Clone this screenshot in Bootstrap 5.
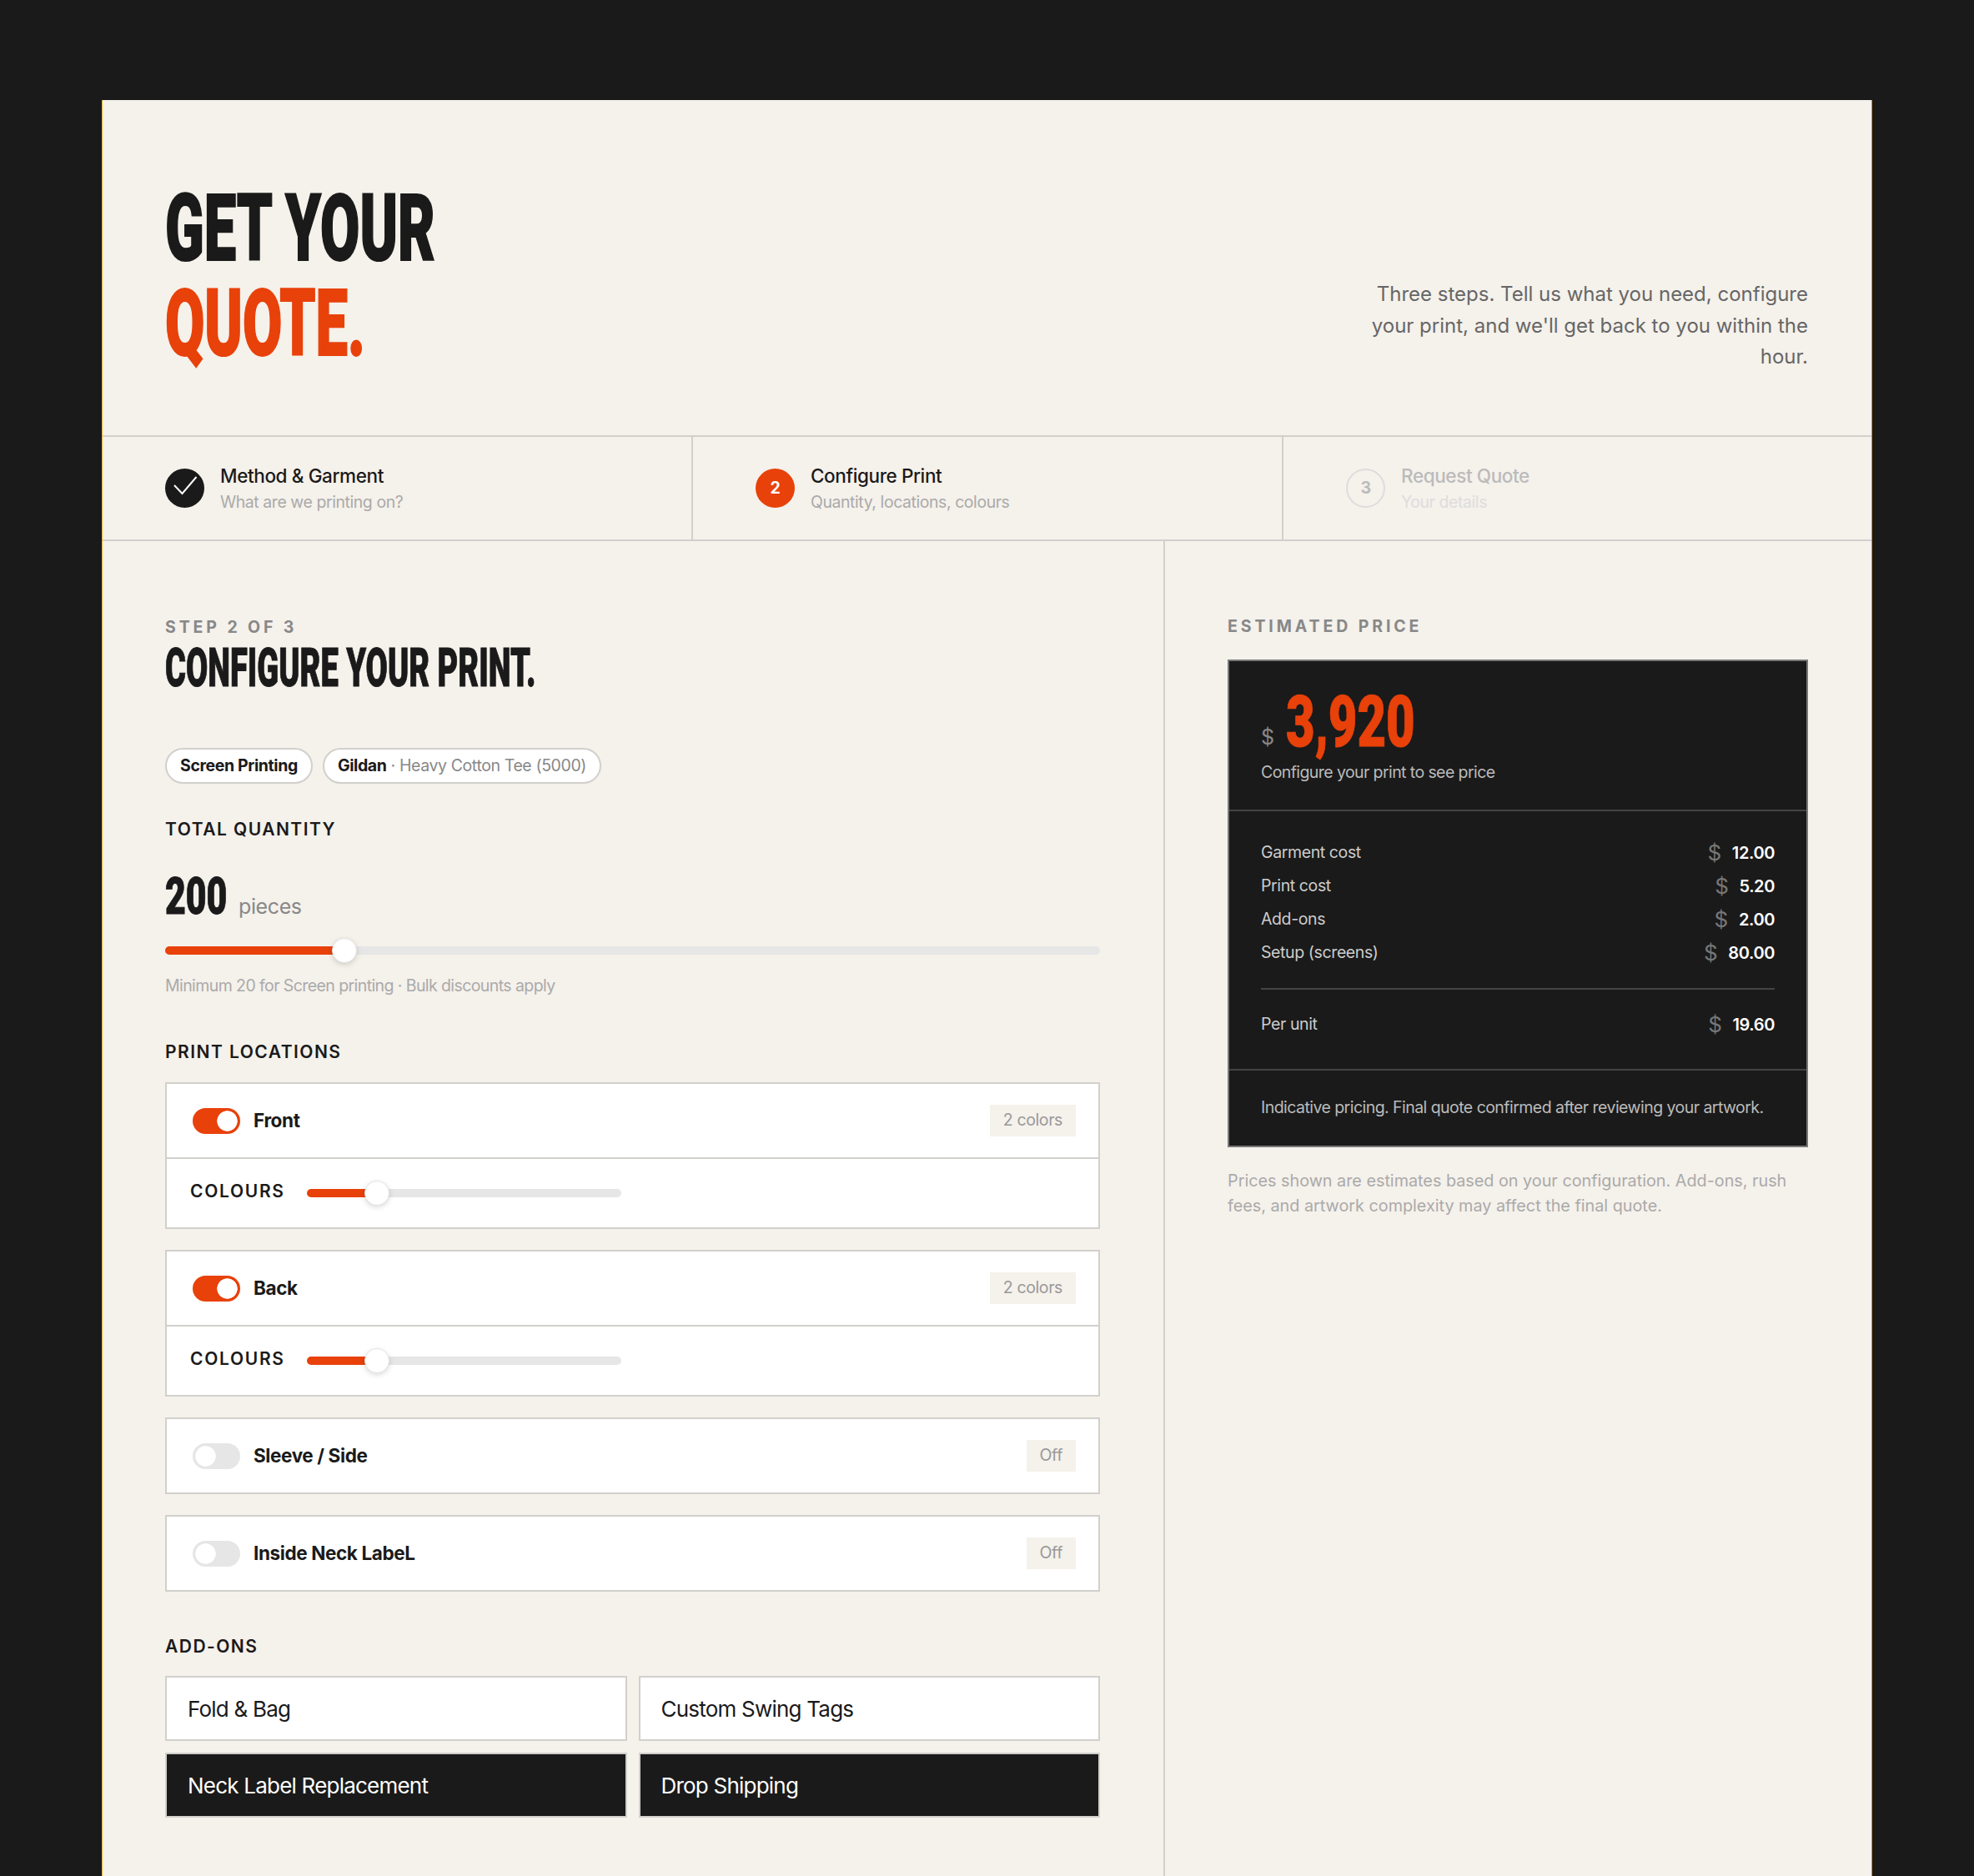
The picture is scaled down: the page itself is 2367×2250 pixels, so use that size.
<!DOCTYPE html>
<html lang="en">
<head>
  <meta charset="UTF-8">
  <meta name="viewport" content="width=device-width, initial-scale=1.0">
  <title>Get Your Quote</title>
  <link href="https://cdn.jsdelivr.net/npm/bootstrap@5.3.0/dist/css/bootstrap.min.css" rel="stylesheet">
  <style>
    :root { --ink: #1a1a1a; --paper: #f5f1eb; --hot: #e8410a; --line: #d2d0cc; }
    body { background: var(--ink); color: var(--ink); font-family: Inter, "Noto Sans", sans-serif; font-size: 19.5px; letter-spacing: -.02em; }
    .quote-panel { margin: 120px 122px 0; min-height: 2130px; background: var(--paper); border-left: 1px solid #e0b52c; border-right: 1px solid #c8902a; }

    /* condensed display type, no such family installed */
    .cond { display: block; font-family: Roboto, "Liberation Sans", sans-serif; font-weight: 900; text-transform: uppercase; white-space: nowrap; transform-origin: left center; letter-spacing: 0; margin: 0; }
    .hero-title { font-size: 112px; line-height: 113.5px; margin-bottom: 3px; transform: scaleX(.612); -webkit-text-stroke: 2px currentColor; }
    .hero-title span { color: var(--hot); }
    .hero-text { width: 570px; font-size: 24px; line-height: 37.7px; color: #666; text-align: right; letter-spacing: 0; }
    .hero-box { padding: 75px 76px 75px 75px; height: 402px; }

    .step-bar { border-top: 2px solid var(--line); border-bottom: 2px solid var(--line); height: 127px; }
    .step-cell { flex: 0 0 708px; padding-left: 75px; gap: 19px; border-right: 2px solid var(--line); }
    .step-cell:last-child { flex: 1 1 0; border-right: 0; }
    .step-dot { width: 47px; height: 47px; border-radius: 50%; font-size: 19.5px; font-weight: 700; flex: none; }
    .dot-done { background: var(--ink); }
    .dot-now { background: var(--hot); color: #fff; }
    .dot-next { border: 2px solid #ddd; color: #bbb; }
    .step-name { font-size: 22.5px; font-weight: 500; line-height: 32px; }
    .step-hint { font-size: 19.4px; line-height: 30px; color: #aaa; }
    .step-off .step-name { color: #bbb; }
    .step-off .step-hint { color: #ddd; }

    .main-col { flex: 0 0 1274px; padding: 88px 76px 0 75px; border-right: 2px solid var(--line); }
    .side-col { flex: 1; padding: 86.5px 76px 0 75px; }
    .kicker { font-size: 19.5px; font-weight: 700; letter-spacing: .2em; color: #888; line-height: 30px; }
    .config-title { font-size: 64px; line-height: 58px; margin-top: 6px; transform: scaleX(.595); -webkit-text-stroke: 1px currentColor; }

    .chip-row { gap: 12px; margin-top: 66px; }
    .chip { height: 43px; padding: 0 16px; background: #fff; border: 2px solid var(--line); border-radius: 22px; font-size: 19.5px; color: #888; }
    .chip b { color: var(--ink); font-weight: 700; }
    .sec-label { font-size: 21px; font-weight: 600; letter-spacing: .07em; line-height: 30px; margin: 0; }
    .qty-label { margin-top: 40px; }
    .loc-label { margin: 50px 0 21px; }
    .addon-label { margin: 51px 0 20px; }

    .qty-row { margin-top: 33px; }
    .qty-num { width: 74px; font-size: 62px; line-height: 64px; transform: scaleX(.69); -webkit-text-stroke: 1px currentColor; }
    .qty-unit { font-size: 25px; color: #888; margin-left: 14px; }
    .qty-range { margin-top: 18px; }
    .hint-line { font-size: 19.5px; color: #aaa; line-height: 30px; margin-top: 12px; letter-spacing: -.03em; }

    .form-range.tint { height: 30px; display: block; }
    .form-range.tint::-webkit-slider-runnable-track { height: 10px; border-radius: 5px; background: linear-gradient(to right, var(--hot) var(--fill), #e6e6e6 var(--fill)); }
    .form-range.tint::-webkit-slider-thumb { width: 30px; height: 30px; margin-top: -10px; border-radius: 50%; background: #fff; border: 1px solid #e4e4e4; box-shadow: 0 2px 6px rgba(0,0,0,.15); }
    .short-range { width: 377px; }

    .loc-box { background: #fff; border: 2px solid var(--line); margin-bottom: 25px; }
    .loc-head { height: 88px; padding: 0 27px 0 31px; }
    .loc-name { font-size: 22.5px; font-weight: 700; margin-left: 16px; }
    .loc-tag { height: 38px; padding: 0 16px; background: var(--paper); color: #999; font-size: 19.5px; }
    .loc-row { height: 84px; padding: 0 28px; border-top: 2px solid var(--line); gap: 26px; }
    .loc-row .sec-label { letter-spacing: .08em; line-height: 26px; margin-bottom: 4px; }

    .form-switch .form-check-input.flip { width: 57px; height: 31px; margin: 0; float: none; border: 0; border-radius: 16px; background-color: #e6e6e6; background-image: radial-gradient(circle 12.5px at 15.5px 50%, #fff 95%, transparent 100%); background-size: auto; background-position: 0 0; box-shadow: none; }
    .form-switch .form-check-input.flip:checked { background-color: var(--hot); background-image: radial-gradient(circle 12.5px at 41.5px 50%, #fff 95%, transparent 100%); }

    .addon-grid { display: grid; grid-template-columns: 1fr 1fr; gap: 14px; }
    .addon-btn { height: 78px; padding: 0 25px; text-align: left; font-size: 26px; letter-spacing: -.03em; background: #fff; color: var(--ink); border: 2px solid var(--line); border-radius: 0; }
    .addon-btn.picked, .addon-btn.picked:hover { background: var(--ink); color: #fff; }

    .price-card { background: var(--ink); border: 2px solid #777; color: #ccc; margin-top: 25px; }
    .price-top { padding: 35px 38px 0; height: 178px; }
    .price-cur { font-size: 25px; color: #888; font-weight: 400; }
    .price-num { width: 154px; margin-left: 14px; font-size: 86px; line-height: 76px; color: var(--hot); transform: scaleX(.695); -webkit-text-stroke: 1px currentColor; }
    .price-sub { font-size: 19.5px; margin-top: 8px; color: #bbb; letter-spacing: -.03em; }
    .price-rows { border-top: 2px solid #444; padding: 30px 38px 0; height: 311px; }
    .price-line { height: 40px; font-size: 19.5px; }
    .price-val { display: flex; align-items: center; }
    .price-line b { color: #fff; font-weight: 600; font-size: 20px; margin-left: 13px; }
    .price-line i { color: #777; font-style: normal; font-size: 26px; line-height: 30px; }
    .price-rule { border-top: 2px solid #444; margin: 22px 0 22px; }
    .price-foot { border-top: 2px solid #444; height: 92px; padding: 0 38px; font-size: 19.5px; color: #bbb; letter-spacing: -.028em; }
    .fine-print { font-size: 19.8px; line-height: 30px; color: #aaa; margin-top: 25px; letter-spacing: 0; }
  </style>
</head>
<body>
  <div class="quote-panel d-flex flex-column">
    <header class="hero-box d-flex justify-content-between align-items-end">
      <h1 class="cond hero-title">Get Your<br><span>Quote.</span></h1>
      <p class="hero-text mb-0">Three steps. Tell us what you need, configure your print, and we'll get back to you within the hour.</p>
    </header>

    <div class="step-bar d-flex">
      <div class="step-cell d-flex align-items-center">
        <div class="step-dot dot-done d-flex align-items-center justify-content-center">
          <svg width="47" height="47" viewBox="0 0 47 47" fill="none" stroke="#fff" stroke-width="2"><path d="M11 20l9.5 10L37.5 10"/></svg>
        </div>
        <div><div class="step-name">Method &amp; Garment</div><div class="step-hint">What are we printing on?</div></div>
      </div>
      <div class="step-cell d-flex align-items-center">
        <div class="step-dot dot-now d-flex align-items-center justify-content-center">2</div>
        <div><div class="step-name">Configure Print</div><div class="step-hint">Quantity, locations, colours</div></div>
      </div>
      <div class="step-cell step-off d-flex align-items-center">
        <div class="step-dot dot-next d-flex align-items-center justify-content-center">3</div>
        <div><div class="step-name">Request Quote</div><div class="step-hint">Your details</div></div>
      </div>
    </div>

    <div class="d-flex flex-grow-1">
      <main class="main-col">
        <div class="kicker">STEP 2 OF 3</div>
        <h2 class="cond config-title">Configure your print.</h2>

        <div class="d-flex chip-row">
          <span class="chip d-inline-flex align-items-center"><b>Screen Printing</b></span>
          <span class="chip d-inline-flex align-items-center"><b>Gildan</b>&nbsp;· Heavy Cotton Tee (5000)</span>
        </div>

        <h3 class="sec-label qty-label">TOTAL QUANTITY</h3>
        <div class="d-flex align-items-baseline qty-row">
          <span class="cond qty-num">200</span><span class="qty-unit">pieces</span>
        </div>
        <input type="range" class="form-range tint qty-range" min="20" max="1000" value="200" style="--fill:216px">
        <div class="hint-line">Minimum 20 for Screen printing · Bulk discounts apply</div>

        <h3 class="sec-label loc-label">PRINT LOCATIONS</h3>

        <div class="loc-box">
          <div class="loc-head d-flex align-items-center justify-content-between">
            <div class="form-check form-switch d-flex align-items-center p-0 m-0">
              <input class="form-check-input flip" type="checkbox" role="switch" checked>
              <span class="loc-name">Front</span>
            </div>
            <span class="loc-tag d-inline-flex align-items-center">2 colors</span>
          </div>
          <div class="loc-row d-flex align-items-center">
            <span class="sec-label">COLOURS</span>
            <input type="range" class="form-range tint short-range" min="1" max="6" value="2" style="--fill:85px">
          </div>
        </div>

        <div class="loc-box">
          <div class="loc-head d-flex align-items-center justify-content-between">
            <div class="form-check form-switch d-flex align-items-center p-0 m-0">
              <input class="form-check-input flip" type="checkbox" role="switch" checked>
              <span class="loc-name">Back</span>
            </div>
            <span class="loc-tag d-inline-flex align-items-center">2 colors</span>
          </div>
          <div class="loc-row d-flex align-items-center">
            <span class="sec-label">COLOURS</span>
            <input type="range" class="form-range tint short-range" min="1" max="6" value="2" style="--fill:85px">
          </div>
        </div>

        <div class="loc-box">
          <div class="loc-head d-flex align-items-center justify-content-between">
            <div class="form-check form-switch d-flex align-items-center p-0 m-0">
              <input class="form-check-input flip" type="checkbox" role="switch">
              <span class="loc-name">Sleeve / Side</span>
            </div>
            <span class="loc-tag d-inline-flex align-items-center">Off</span>
          </div>
        </div>

        <div class="loc-box">
          <div class="loc-head d-flex align-items-center justify-content-between">
            <div class="form-check form-switch d-flex align-items-center p-0 m-0">
              <input class="form-check-input flip" type="checkbox" role="switch">
              <span class="loc-name">Inside Neck LabeL</span>
            </div>
            <span class="loc-tag d-inline-flex align-items-center">Off</span>
          </div>
        </div>

        <h3 class="sec-label addon-label">ADD-ONS</h3>
        <div class="addon-grid">
          <button class="btn addon-btn">Fold &amp; Bag</button>
          <button class="btn addon-btn">Custom Swing Tags</button>
          <button class="btn addon-btn picked">Neck Label Replacement</button>
          <button class="btn addon-btn picked">Drop Shipping</button>
        </div>
      </main>

      <aside class="side-col">
        <div class="kicker">ESTIMATED PRICE</div>
        <div class="price-card">
          <div class="price-top">
            <div class="d-flex align-items-end">
              <span class="price-cur">$</span><span class="cond price-num">3,920</span>
            </div>
            <div class="price-sub">Configure your print to see price</div>
          </div>
          <div class="price-rows">
            <div class="price-line d-flex align-items-center justify-content-between"><span>Garment cost</span><span class="price-val"><i>$</i><b>12.00</b></span></div>
            <div class="price-line d-flex align-items-center justify-content-between"><span>Print cost</span><span class="price-val"><i>$</i><b>5.20</b></span></div>
            <div class="price-line d-flex align-items-center justify-content-between"><span>Add-ons</span><span class="price-val"><i>$</i><b>2.00</b></span></div>
            <div class="price-line d-flex align-items-center justify-content-between"><span>Setup (screens)</span><span class="price-val"><i>$</i><b>80.00</b></span></div>
            <div class="price-rule"></div>
            <div class="price-line d-flex align-items-center justify-content-between"><span>Per unit</span><span class="price-val"><i>$</i><b>19.60</b></span></div>
          </div>
          <div class="price-foot d-flex align-items-center">Indicative pricing. Final quote confirmed after reviewing your artwork.</div>
        </div>
        <p class="fine-print">Prices shown are estimates based on your configuration. Add-ons, rush fees, and artwork complexity may affect the final quote.</p>
      </aside>
    </div>
  </div>
  <script src="https://cdn.jsdelivr.net/npm/bootstrap@5.3.0/dist/js/bootstrap.bundle.min.js"></script>
</body>
</html>
